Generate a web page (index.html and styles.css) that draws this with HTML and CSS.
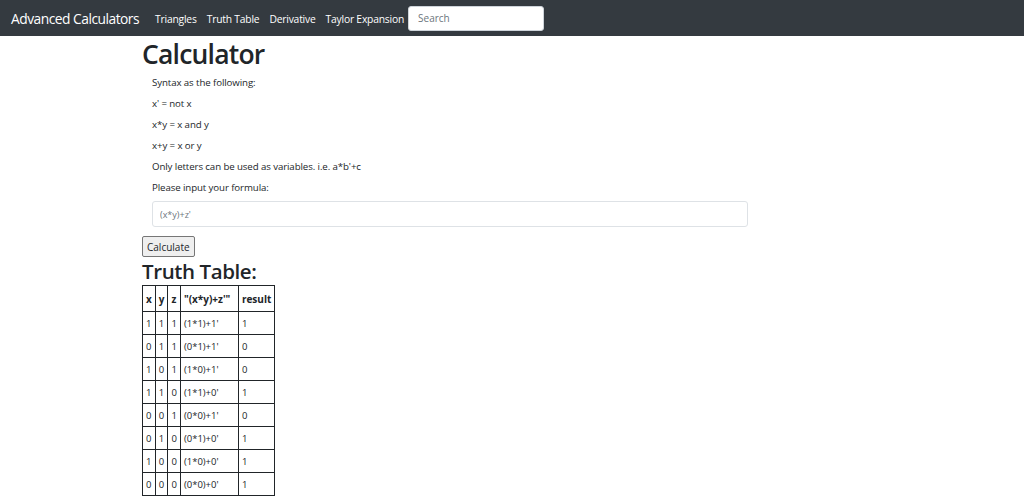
FILE: index.html
```html
<!DOCTYPE html>
<html>
<head>
  <link rel="stylesheet" href="styles.css">
</head>
<body>
  <nav class="navbar">
    <a class="brand" href="#">Advanced Calculators</a>
    <ul class="nav-links">
      <li><a href="#">Triangles</a></li>
      <li><a href="#">Truth Table</a></li>
      <li><a href="#">Derivative</a></li>
      <li><a href="#">Taylor Expansion</a></li>
    </ul>
    <input class="search" type="text" placeholder="Search">
  </nav>

  <main class="content">
    <h1>Calculator</h1>
    <div class="syntax">
      <p>Syntax as the following:</p>
      <p>x' = not x</p>
      <p>x*y = x and y</p>
      <p>x+y = x or y</p>
      <p>Only letters can be used as variables. i.e. a*b'+c</p>
      <p>Please input your formula:</p>
      <input class="formula" type="text" value="(x*y)+z'">
    </div>
    <button class="calc-button">Calculate</button>

    <h2>Truth Table:</h2>
    <table class="truth-table">
      <tr><th>x</th><th>y</th><th>z</th><th>"(x*y)+z'"</th><th>result</th></tr>
      <tr><td>1</td><td>1</td><td>1</td><td>(1*1)+1'</td><td>1</td></tr>
      <tr><td>0</td><td>1</td><td>1</td><td>(0*1)+1'</td><td>0</td></tr>
      <tr><td>1</td><td>0</td><td>1</td><td>(1*0)+1'</td><td>0</td></tr>
      <tr><td>1</td><td>1</td><td>0</td><td>(1*1)+0'</td><td>1</td></tr>
      <tr><td>0</td><td>0</td><td>1</td><td>(0*0)+1'</td><td>0</td></tr>
      <tr><td>0</td><td>1</td><td>0</td><td>(0*1)+0'</td><td>1</td></tr>
      <tr><td>1</td><td>0</td><td>0</td><td>(1*0)+0'</td><td>1</td></tr>
      <tr><td>0</td><td>0</td><td>0</td><td>(0*0)+0'</td><td>1</td></tr>
    </table>
  </main>
</body>
</html>
```

FILE: styles.css
```css
body {
  margin: 0;
  font-family: "Open Sans", "Noto Sans", sans-serif;
  color: #212529;
  background: #fff;
}

.navbar {
  display: flex;
  align-items: center;
  height: 36px;
  padding: 0 11px;
  background-color: #343a40;
  box-sizing: border-box;
}

.brand {
  color: #fff;
  font-size: 13.8px;
  text-decoration: none;
  margin-right: 16px;
  letter-spacing: -0.5px;
}

.nav-links {
  display: flex;
  gap: 10px;
  list-style: none;
  margin: 0;
  padding: 0 0 3px;
}

.nav-links a {
  color: #fff;
  font-size: 10.3px;
  text-decoration: none;
  letter-spacing: -0.2px;
}

.search {
  margin-left: 4px;
  width: 136px;
  height: 25px;
  box-sizing: border-box;
  border: 1px solid #ced4da;
  border-radius: 3px;
  padding: 0 9px;
  font-family: inherit;
  font-size: 10px;
  color: #495057;
}

.search::placeholder {
  color: #6c757d;
}

.content {
  padding-left: 142px;
}

h1 {
  margin: 0;
  padding-top: 1px;
  font-size: 26.5px;
  font-weight: 600;
  line-height: 34px;
  letter-spacing: -0.8px;
}

.syntax {
  padding: 1px 10px 0;
}

.syntax p {
  margin: 0;
  font-size: 9.7px;
  line-height: 21px;
  letter-spacing: -0.1px;
}

.formula {
  display: block;
  margin-top: 3px;
  width: 596px;
  height: 26px;
  box-sizing: border-box;
  border: 1px solid #dee2e6;
  border-radius: 3px;
  padding: 0 7px;
  font-family: inherit;
  font-size: 9px;
  color: #6c757d;
}

.calc-button {
  margin-top: 9px;
  height: 21px;
  padding: 0 4px;
  font-family: inherit;
  font-size: 10px;
  color: #212529;
  background: #efefef;
  border: 1px solid #767676;
  border-radius: 2px;
}

h2 {
  margin: 0;
  font-size: 20.5px;
  font-weight: 600;
  line-height: 28px;
  letter-spacing: -0.4px;
}

.truth-table {
  border-collapse: collapse;
  font-size: 9.5px;
}

.truth-table th,
.truth-table td {
  border: 1px solid #212529;
  padding: 0 3px;
  height: 22px;
  text-align: left;
}

.truth-table th {
  height: 25px;
  font-size: 10px;
  font-weight: 700;
}

.truth-table td:nth-child(4) {
  width: 51px;
}

.truth-table td:nth-child(5) {
  width: 26px;
}
```
